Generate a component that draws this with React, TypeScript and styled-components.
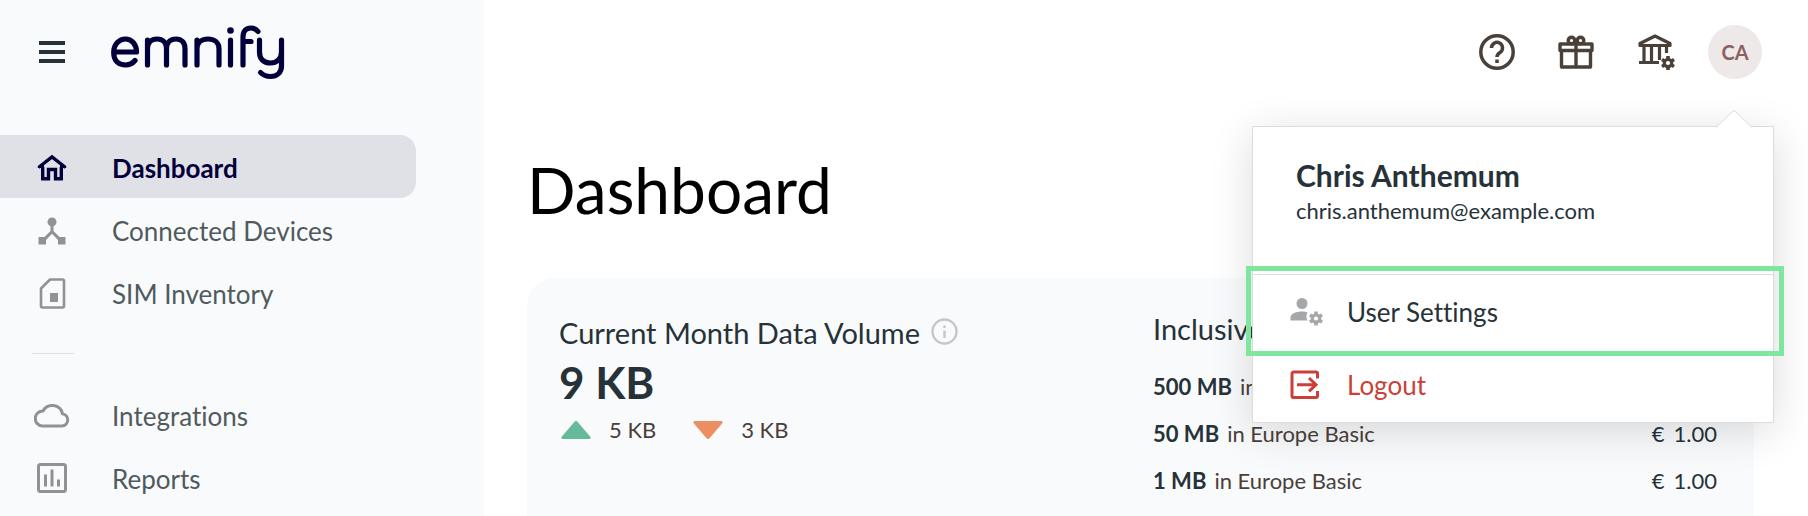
import React from "react";
import styled, { createGlobalStyle, css } from "styled-components";
import { MdDeviceHub } from "react-icons/md";

const GlobalStyle = createGlobalStyle`
  *, *::before, *::after { box-sizing: border-box; }
  body {
    margin: 0;
    background: #fff;
    color: #263238;
    font-family: Lato, "Liberation Sans", sans-serif;
    font-size: 22px;
    line-height: 28px;
    font-variant-ligatures: none;
  }
  h1, h2, p, ul { margin: 0; padding: 0; }
  ul { list-style: none; }
  button { font: inherit; font-variant-ligatures: none; color: inherit; background: none; border: 0; padding: 0; cursor: pointer; }
`;

const Shell = styled.div`
  display: grid;
  grid-template-columns: 484px minmax(0, 1fr);
  min-height: 100vh;
`;

const Sidebar = styled.aside`
  background: #f9fafc;
`;

const Brand = styled.div`
  display: flex;
  align-items: center;
  gap: 44px;
  height: 103px;
  padding-left: 39px;
`;

const MenuButton = styled.button`
  display: grid;
  gap: 5px;
  width: 26px;
`;

const MenuBar = styled.span`
  height: 4px;
  background: #263238;
`;

const Nav = styled.nav`
  padding-top: 32px;
`;

const NavIcon = styled.svg`
  display: block;
  width: 36px;
  height: 36px;
  color: #909293;
  fill: none;
  stroke: currentColor;
`;

const NavItem = styled.a<{ $active?: boolean }>`
  display: grid;
  grid-template-columns: 36px 1fr;
  align-items: center;
  gap: 42px;
  height: 63px;
  margin-right: 68px;
  padding: 2px 0 0 34px;
  border-radius: 0 16px 16px 0;
  color: #505a5e;
  font-size: 26px;
  line-height: 32px;
  text-decoration: none;
  ${(p) =>
    p.$active &&
    css`
      background: #e0e1e7;
      color: #02003a;
      font-weight: 700;

      ${NavIcon} {
        color: inherit;
      }
    `}
`;

const Separator = styled.hr`
  width: 42px;
  height: 1px;
  margin: 29px 0 29px 32px;
  border: 0;
  background: #dcdedf;
`;

const Main = styled.main`
  display: flex;
  flex-direction: column;
  min-width: 0;
`;

const TopBar = styled.header`
  display: flex;
  align-items: center;
  justify-content: flex-end;
  gap: 39px;
  height: 104px;
  padding-right: 46px;
`;

const IconButton = styled.button`
  display: block;
  width: 40px;
  height: 40px;
`;

const ToolIcon = styled.svg`
  display: block;
  width: 40px;
  height: 40px;
  fill: none;
  stroke: #49403a;
`;

const Account = styled.div`
  position: relative;
  margin-left: -6px;
`;

const Avatar = styled.button`
  display: block;
  width: 54px;
  height: 54px;
  border-radius: 50%;
  background: #efe8e9;
  color: #8b6060;
  font-size: 20px;
  font-weight: 700;
`;

const Menu = styled.section`
  position: absolute;
  z-index: 2;
  top: 101px;
  right: -12px;
  width: 522px;
  border: 1px solid #dcdcdc;
  background: #fff;
  box-shadow: 0 8px 40px rgba(0, 0, 0, 0.14);
`;

const MenuArrow = styled.svg`
  position: absolute;
  top: -17px;
  right: 21px;
  width: 36px;
  height: 18px;
  fill: #fff;
  stroke: #dcdcdc;
`;

const Profile = styled.div`
  height: 147px;
  padding: 30px 43px 0;
`;

const ProfileName = styled.h2`
  font-size: 30px;
  line-height: 36px;
  font-weight: 700;
`;

const ProfileMail = styled.p`
  font-size: 22px;
  line-height: 36px;
`;

const MenuItem = styled.button<{ $danger?: boolean }>`
  display: flex;
  align-items: center;
  gap: 26px;
  width: 100%;
  height: 74px;
  padding: 0 36px;
  border-top: ${(p) => (p.$danger ? "0" : "1px solid #dcdcdc")};
  color: ${(p) => (p.$danger ? "#cc3f38" : "#263238")};
  font-size: 26px;
  line-height: 32px;
`;

const MenuIcon = styled.svg`
  width: 32px;
  height: 32px;
  overflow: visible;
`;

const Highlight = styled.div`
  position: absolute;
  top: 139px;
  left: -7px;
  right: -11px;
  height: 90px;
  border: 5px solid #7fe69d;
  pointer-events: none;
`;

const PageTitle = styled.h1`
  padding: 46px 43px 0;
  color: #000;
  font-size: 64px;
  line-height: 80px;
  font-weight: 400;
`;

const Card = styled.section`
  display: grid;
  grid-template-columns: 594px minmax(0, 1fr);
  flex: 1;
  margin: 48px 54px 0 43px;
  padding: 30px 37px 0 32px;
  border-radius: 28px 28px 0 0;
  background: #f9fafc;
`;

const Usage = styled.div`
  padding-top: 4px;
`;

const CardTitle = styled.h2`
  display: flex;
  align-items: center;
  gap: 11px;
  font-size: 29px;
  line-height: 42px;
  font-weight: 400;
`;

const InfoIcon = styled.svg`
  width: 27px;
  height: 27px;
  margin-bottom: 4px;
  fill: none;
  stroke: #c4c6c8;
`;

const Total = styled.p`
  padding-top: 2px;
  font-size: 44px;
  line-height: 52px;
  font-weight: 700;
`;

const Traffic = styled.div`
  display: flex;
  gap: 37px;
  padding: 8px 0 0 2px;
  color: #49403a;
`;

const TrafficItem = styled.span`
  display: flex;
  align-items: center;
  gap: 18px;
`;

const Triangle = styled.svg`
  width: 30px;
  height: 18px;
`;

const PlanList = styled.ul`
  padding-top: 21px;
`;

const Plan = styled.li`
  display: flex;
  justify-content: space-between;
  height: 47px;
  line-height: 32px;
  color: #49403a;
`;

const PlanName = styled.span`
  display: flex;
  gap: 8px;
`;

const Strong = styled.strong`
  color: #263238;
`;

const Price = styled.span`
  display: flex;
  gap: 9px;
  color: #263238;
`;

function Gear({ x, y, color }: { x: number; y: number; color: string }) {
  return (
    <g transform={`translate(${x} ${y})`} fill="none" stroke={color}>
      <circle r="3.700" strokeWidth="3.200" />
      {[0, 60, 120, 180, 240, 300].map((angle) => (
        <path key={angle} d="M0-4.500V-7" strokeWidth="3.600" transform={`rotate(${angle})`} />
      ))}
    </g>
  );
}

function Logo() {
  return (
    <svg width="176" height="60" viewBox="0 0 176 60" role="img" aria-label="emnify" fill="none" stroke="#02003a" strokeWidth="5.200" strokeLinecap="round" strokeLinejoin="round">
      <path d="M5 30H27.500C27.500 22 22.500 17 16.500 17S4.700 22 4.700 30.500 10 43 16.500 43c4 0 7-1.500 9.500-4.500" />
      <path d="M38.500 43V18M38.500 27c0-6.500 4-10 9.500-10s9.500 3.500 9.500 10v16M57.500 27c0-6.500 4-10 9.500-10s9 3.500 9 10v16" />
      <path d="M88 43V18M88 27c0-6.500 5-10 11-10s11 3.500 11 10v16" />
      <path d="M121.500 18v25M134 43V15c0-6 3-9 8-9 3 0 5 1 7 3.500M134 19.500h8" />
      <path d="M150.500 18v12c0 7 4 11 11 11 6 0 11-4 11-11V18v26c0 6.500-4.500 10.500-11 10.500-4 0-7-1-10-4" />
      <circle cx="121.500" cy="8.500" r="3.300" fill="#02003a" stroke="none" />
    </svg>
  );
}

export default function App() {
  return (
    <>
      <GlobalStyle />
      <Shell>
        <Sidebar>
          <Brand>
            <MenuButton aria-label="Toggle menu">
              <MenuBar /><MenuBar /><MenuBar />
            </MenuButton>
            <Logo />
          </Brand>
          <Nav>
            <NavItem href="#dashboard" $active>
              <NavIcon viewBox="0 0 36 36" strokeWidth="3.400">
                <path d="M8.700 17v11.800h5.800v-9.300h7v9.300h5.800V17" />
                <path d="M4.500 17.500 18 7l13.500 10.500" />
                <path d="M3.300 18 7 15h3v3zM32.700 18 29 15h-3v3z" fill="currentColor" stroke="none" />
              </NavIcon>
              Dashboard
            </NavItem>
            <NavItem href="#devices">
              <MdDeviceHub size={36} color="#909293" />
              Connected Devices
            </NavItem>
            <NavItem href="#sims">
              <NavIcon viewBox="0 0 36 36" strokeWidth="2.600">
                <path d="M16 3.500h12.500a1.500 1.500 0 0 1 1.500 1.500v25a1.500 1.500 0 0 1-1.500 1.500h-20a1.500 1.500 0 0 1-1.500-1.500V12.500z" strokeLinejoin="round" />
                <path d="M16 17h8v9h-8z" fill="currentColor" stroke="none" />
              </NavIcon>
              SIM Inventory
            </NavItem>
            <Separator />
            <NavItem href="#integrations">
              <NavIcon viewBox="0 0 36 36" strokeWidth="3">
                <path d="M8.500 28h19.500a6.200 6.200 0 0 0 .5-12.300 10.500 10.500 0 0 0-19.500-2.700A7.500 7.500 0 0 0 8.500 28z" />
              </NavIcon>
              Integrations
            </NavItem>
            <NavItem href="#reports">
              <NavIcon viewBox="0 0 36 36" strokeWidth="3">
                <rect x="4.500" y="3.500" width="27" height="27" rx="2" />
                <path d="M11.500 13.500v12M18 8.500v17M24.500 18.500v7" />
              </NavIcon>
              Reports
            </NavItem>
          </Nav>
        </Sidebar>
        <Main>
          <TopBar>
            <IconButton aria-label="Help">
              <ToolIcon viewBox="0 0 40 40" strokeWidth="3.500">
                <circle cx="20" cy="20" r="16.200" />
                <path d="M14.500 16a5.500 5.500 0 1 1 8.500 4.500c-2 1.300-3 2.300-3 4.500M20 27.500v3.500" />
              </ToolIcon>
            </IconButton>
            <IconButton aria-label="Rewards">
              <ToolIcon viewBox="0 0 40 40" strokeWidth="3.400" strokeLinejoin="round">
                <path d="M4 12h32v6.500H4zM5.500 18.500h29V35h-29zM20 12v23" />
                <circle cx="15.500" cy="8.500" r="3.300" /><circle cx="24.500" cy="8.500" r="3.300" />
              </ToolIcon>
            </IconButton>
            <IconButton aria-label="Organisation">
              <ToolIcon viewBox="0 0 40 40" strokeWidth="3.200" strokeLinejoin="round">
                <path d="M5 11.500 20 4 35 11.500V13.500H5zM9 14v16M16.500 14v16M24.500 14v14M31.500 14v7M4 30.500h20" />
                <Gear x={33} y={31} color="#49403a" />
              </ToolIcon>
            </IconButton>
            <Account>
              <Avatar>CA</Avatar>
              <Menu>
                <MenuArrow viewBox="0 0 36 18"><path d="M0 17.500 16.500 1.500q1.500-1.500 3 0L36 17.500" /></MenuArrow>
                <Profile>
                  <ProfileName>Chris Anthemum</ProfileName>
                  <ProfileMail>chris.anthemum@example.com</ProfileMail>
                </Profile>
                <MenuItem>
                  <MenuIcon viewBox="0 0 32 32" fill="#a4a8ab">
                    <circle cx="13" cy="7.500" r="5.500" />
                    <path d="M1.500 24.500v-3c0-4 6-6 11.500-6 2.500 0 4 .3 5.500 1-1.500 2.500-1.500 5 0 8z" />
                    <Gear x={27} y={22.5} color="#a4a8ab" />
                  </MenuIcon>
                  User Settings
                </MenuItem>
                <MenuItem $danger>
                  <MenuIcon viewBox="0 0 32 32" fill="none" stroke="#cc3f38" strokeWidth="3">
                    <path d="M28.500 9.500V4.500a1.500 1.500 0 0 0-1.500-1.500H4.500a1.500 1.500 0 0 0-1.500 1.500v22.500a1.500 1.500 0 0 0 1.500 1.500H27a1.500 1.500 0 0 0 1.500-1.500v-5M8 15.700h19M20 9l7 6.700-7 6.700" />
                  </MenuIcon>
                  Logout
                </MenuItem>
                <Highlight />
              </Menu>
            </Account>
          </TopBar>
          <PageTitle>Dashboard</PageTitle>
          <Card>
            <Usage>
              <CardTitle>
                Current Month Data Volume
                <InfoIcon viewBox="0 0 27 27" strokeWidth="2.400">
                  <circle cx="13.500" cy="13.500" r="12" /><path d="M13.500 12.500v7.500M13.500 7.500v2.500" />
                </InfoIcon>
              </CardTitle>
              <Total>9 KB</Total>
              <Traffic>
                <TrafficItem>
                  <Triangle viewBox="0 0 30 18" fill="#66b99a"><path d="M13.500.7q1.500-1.400 3 0L29.500 16q.5 2-1.500 2H2q-2 0-1.500-2z" /></Triangle>
                  5 KB
                </TrafficItem>
                <TrafficItem>
                  <Triangle viewBox="0 0 30 18" fill="#eb8e62"><path d="M13.500 17.300q1.500 1.400 3 0L29.500 2q.5-2-1.500-2H2Q0 0 .5 2z" /></Triangle>
                  3 KB
                </TrafficItem>
              </Traffic>
            </Usage>
            <div>
              <CardTitle>Inclusive</CardTitle>
              <PlanList>
                <Plan><PlanName><Strong>500 MB</Strong>in</PlanName></Plan>
                <Plan><PlanName><Strong>50 MB</Strong>in Europe Basic</PlanName><Price><span>€</span>1.00</Price></Plan>
                <Plan><PlanName><Strong>1 MB</Strong>in Europe Basic</PlanName><Price><span>€</span>1.00</Price></Plan>
              </PlanList>
            </div>
          </Card>
        </Main>
      </Shell>
    </>
  );
}
